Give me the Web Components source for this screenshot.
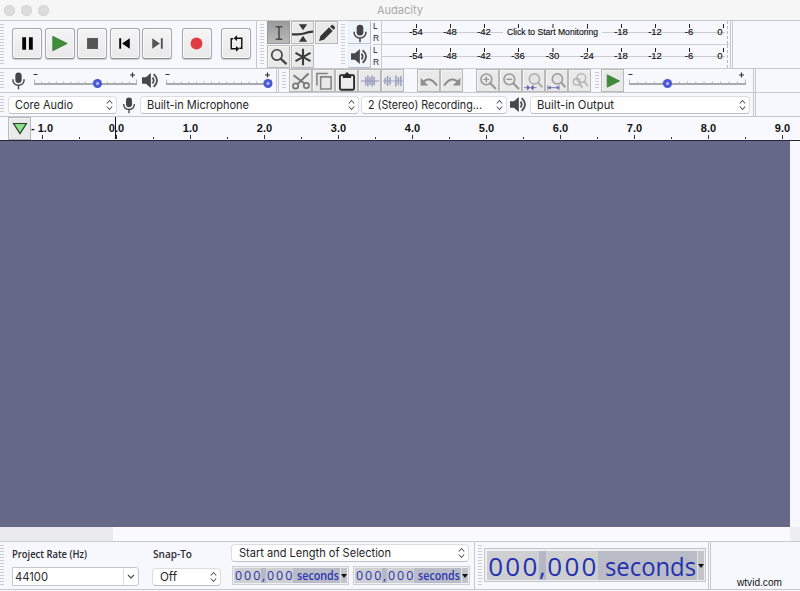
<!DOCTYPE html>
<html lang="en">
<head>
<meta charset="utf-8">
<title>Audacity</title>
<style>
html, body { margin: 0; width: 800px; height: 591px; overflow: hidden; }
body { font-family: "Open Sans", "Noto Sans", sans-serif; background: #f7f8fe; color: #2b2b2d; }
</style>
</head>
<body>
<audacity-window></audacity-window>

<script>
// Icon set. Every drawing uses a 24x24 box.
const ICONS = {
    pause: '<path d="M6.5 5.500h4v13h-4zM13.500 5.500h4v13h-4z" fill="#050505"/>',
    play: '<path d="M5 4.500v15L20 12z" fill="#3f8d3b" stroke="#327432" stroke-width=".8"/>',
    stop: '<path d="M6.3 6.3h11.400v11.400h-11.400z" fill="#555"/>',
    start: '<path d="M6.5 6.5h2v11h-2zM17.5 6.5v11L9.5 12z" fill="#050505"/>',
    end: '<path d="M15.500 6.500h2v11h-2zM6.500 6.500v11l8-5.500z" fill="#555"/>',
    record: '<circle cx="12" cy="12" r="6.200" fill="#e13c42"/>',
    loop: '<path d="M8.500 7H6.500v10.500H12M15 17H17.500V6.500H11" fill="none" stroke="#111" stroke-width="1.500"/><path d="M12.500 3.500v6L9 6.500zM11.500 14.500v6l3.500-3z" fill="#111"/>',
    ibeam: '<path d="M8 4.500h8M12 4.500v15M8 19.500h8" fill="none" stroke="#4a4a4a" stroke-width="1.900"/>',
    envelope: '<path d="M0 13.500c7-.3 10 .5 14-1.200 3-1.300 6-1.800 9-1.800" fill="none" stroke="#383838" stroke-width="2.500"/><path d="M7.500 2.500h9L12 9zM7.500 21.500h9L12 15z" fill="#383838"/>',
    pencil: '<path d="M2.500 21.500l1.600-5.800L14.500 5.200l4.300 4.300L8.300 20zM15.800 4.100l1.400-1.400q1.300-1 2.500.2l1.500 1.500q1 1.200 0 2.400l-1.400 1.400z" fill="#353535"/>',
    zoom: '<circle cx="9.500" cy="9.500" r="6.200" fill="none" stroke="#444" stroke-width="2"/><path d="M14 14l7 6.500" stroke="#444" stroke-width="2.600"/>',
    multi: '<path d="M12 2v20M3 7l18 10M21 7L3 17" stroke="#3c3c3c" stroke-width="2.500"/>',
    mic: '<rect x="8" y="2" width="8" height="13" rx="4" fill="#454549"/><path d="M5 10.500v1.500q.5 5.500 7 6 6.500-.5 7-6v-1.500M12 18v5" fill="none" stroke="#454549" stroke-width="1.800"/>',
    speaker: '<path d="M0 7.500h5.500L12.500 1.500v21L5.500 16.500H0z" fill="#48484b"/><path d="M14.800 8q3.500 4 0 8M16.500 3q9.500 9 0 18" fill="none" stroke="#48484b" stroke-width="2.500"/>',
    cut: '<path d="M21 3L8 15.500M3 5l14 10.500" stroke="#777" stroke-width="2.300"/><circle cx="5.500" cy="18" r="3.200" fill="none" stroke="#777" stroke-width="2"/><circle cx="18.500" cy="17.500" r="3.200" fill="none" stroke="#777" stroke-width="2"/>',
    copy: '<path d="M8 7h12.500v14.500H8z" fill="none" stroke="#858585" stroke-width="1.900"/><path d="M3.500 17.500V3h13" fill="none" stroke="#858585" stroke-width="1.900"/>',
    paste: '<rect x="3.500" y="5" width="17" height="17.500" rx="1.500" fill="#ededed" stroke="#292929" stroke-width="2.200"/><path d="M7 8.500V4.500h2.500q.5-3 2.500-3t2.500 3H17v4z" fill="#292929"/>',
    trim: '<path d="M1 12h22" stroke="#8d95b5" stroke-width="1.200"/><path d="M7 7v10M9.500 5.500v13M12 7.500v9M14.500 5.500v13M17 7v10" stroke="#929abc" stroke-width="1.700"/>',
    silence: '<path d="M0 12h24" stroke="#9ba2bb" stroke-width="1.100"/><path d="M2.500 8.500v7M5.500 6v12M8.500 7.500v9M15.500 5.500v13M18.500 7.500v9M21.500 6v12" stroke="#929abc" stroke-width="1.700"/>',
    undo: '<path d="M4.500 13.500q8-8.500 17 4" fill="none" stroke="#8e8e8e" stroke-width="2.400"/><path d="M2 8v9.500h9z" fill="#8e8e8e"/>',
    redo: '<path d="M19.500 13.500q-8-8.500-17 4" fill="none" stroke="#8e8e8e" stroke-width="2.400"/><path d="M22 8v9.500h-9z" fill="#8e8e8e"/>',
    zoomin: '<circle cx="10" cy="10" r="6.500" fill="none" stroke="#999" stroke-width="1.900"/><path d="M14.500 14.500l7 7" stroke="#999" stroke-width="2.600"/><path d="M6.500 10h7M10 6.500v7" stroke="#999" stroke-width="1.700"/>',
    zoomout: '<circle cx="10" cy="10" r="6.500" fill="none" stroke="#999" stroke-width="1.900"/><path d="M14.500 14.500l7 7" stroke="#999" stroke-width="2.600"/><path d="M6.500 10h7" stroke="#999" stroke-width="1.700"/>',
    zoomsel: '<circle cx="12.500" cy="9.500" r="6.200" fill="#e4e4e4" stroke="#aaa" stroke-width="1.800"/><path d="M17 14l5 5.500" stroke="#aaa" stroke-width="2.300"/><path d="M0 20h6M9 20h6M4 17.500l3 2.500-3 2.500zM11 17.500l-3 2.500 3 2.500z" fill="#6168a8" stroke="#6168a8"/>',
    zoomfit: '<circle cx="12.500" cy="9.500" r="6.200" fill="#e4e4e4" stroke="#999" stroke-width="1.800"/><path d="M17 14l5 5.500" stroke="#999" stroke-width="2.300"/><path d="M1 17v6M14.500 17v6M1.500 20h13M4 18.500l-2 1.500 2 1.500zM12 18.500l2 1.500-2 1.500z" fill="#6168a8" stroke="#6168a8"/>',
    zoomtoggle: '<circle cx="13.500" cy="8.500" r="5.300" fill="none" stroke="#b3b3b3" stroke-width="1.700"/><circle cx="8" cy="13" r="4" fill="none" stroke="#b3b3b3" stroke-width="1.600"/><path d="M16.500 12l5 6M11 15.500l4 4.500" stroke="#b3b3b3" stroke-width="2.200"/>',
    pin: '<path d="M5 6h14l-7 11z" fill="#8fe08a" stroke="#2c3d2c" stroke-width="1.300"/>'
}

class UiIcon extends HTMLElement {
    constructor() {
        super()
        this.attachShadow({ mode: 'open' })
    }

    connectedCallback() {
        const size = this.getAttribute('size') ?? '22'
        this.shadowRoot.innerHTML = `
            <style>
            :host { display: block; flex: none; width: ${size}px; height: ${size}px; }
            svg { display: block; }
            </style>
            <svg width="${size}" height="${size}" viewBox="0 0 24 24">${ICONS[this.getAttribute('name')]}</svg>
        `
    }
}
customElements.define('ui-icon', UiIcon)

// Text stretched or condensed to a fixed width
class FitText extends HTMLElement {
    constructor() {
        super()
        this.attachShadow({ mode: 'open' })
    }

    connectedCallback() {
        const width = Number(this.getAttribute('width'))
        this.shadowRoot.innerHTML = `
            <style>
            :host { display: block; flex: none; width: ${width}px; white-space: nowrap; }
            span { display: inline-block; transform-origin: 0 50%; }
            </style>
            <span></span>
        `
        const span = this.shadowRoot.querySelector('span')
        span.textContent = this.getAttribute('text')
        span.style.transform = `scaleX(${width / span.getBoundingClientRect().width})`
    }
}
customElements.define('fit-text', FitText)

// Dotted handle at the left of each toolbar
class ToolGrip extends HTMLElement {
    constructor() {
        super()
        this.attachShadow({ mode: 'open' })
        this.shadowRoot.innerHTML = `
            <style>
            :host {
                display: block; flex: none; width: 4px; align-self: stretch; margin: 3px 0;
                background: repeating-linear-gradient(#cbccd2 0 1px, transparent 1px 3px);
            }
            </style>
        `
    }
}
customElements.define('tool-grip', ToolGrip)

class TransportButton extends HTMLElement {
    constructor() {
        super()
        this.attachShadow({ mode: 'open' })
    }

    connectedCallback() {
        this.shadowRoot.innerHTML = `
            <style>
            :host {
                display: grid; place-items: center; flex: none; box-sizing: border-box;
                width: 30px; height: 31px; border: 1px solid #a9a9ab; border-bottom-color: #8c8c8e; border-radius: 3px;
                background: linear-gradient(#f4f4f4, #e9e9ea); box-shadow: inset 0 0 0 1px #fafafa, 0 1px 1px #ccc;
            }
            </style>
            <ui-icon name="${this.getAttribute('icon')}" size="23"></ui-icon>
        `
    }
}
customElements.define('transport-button', TransportButton)

class ToolButton extends HTMLElement {
    constructor() {
        super()
        this.attachShadow({ mode: 'open' })
    }

    connectedCallback() {
        this.shadowRoot.innerHTML = `
            <style>
            :host {
                display: grid; place-items: center; flex: none; box-sizing: border-box;
                width: 23px; height: 23px; border: 1px solid #b9b9bc; background: #e9e9ea;
                box-shadow: inset 1px 1px #f5f5f5;
            }
            :host([active]) { background: linear-gradient(#9c9c9c, #b9b9b9); border-color: #999; box-shadow: none; }
            :host([blue]) { background: #f0f4fd; border-color: #e9edf6 #b4bfd6 #b4bfd6 #e9edf6; box-shadow: none; }
            </style>
            <ui-icon name="${this.getAttribute('icon')}" size="${this.getAttribute('size') ?? 20}"></ui-icon>
        `
    }
}
customElements.define('tool-button', ToolButton)

class UiSelect extends HTMLElement {
    constructor() {
        super()
        this.attachShadow({ mode: 'open' })
    }

    connectedCallback() {
        const width = this.getAttribute('width')
        this.shadowRoot.innerHTML = `
            <style>
            :host {
                display: flex; align-items: center; justify-content: space-between; flex: none; box-sizing: border-box;
                width: ${width}px; height: 18px; padding: 0 3px 0 6px; border: 1px solid #dcdde2; border-bottom-color: #bfc0c6;
                border-radius: 4px; background: #fff; font: 11.500px/16px Inter, sans-serif; color: #262628;
            }
            svg { display: block; }
            </style>
            <slot></slot>
            <svg width="7" height="12" viewBox="0 0 7 12"><path d="M.8 4.500L3.500 1.500 6.200 4.500M.8 7.500l2.700 3 2.700-3" fill="none" stroke="#5a5a5c" stroke-width="1.100"/></svg>
        `
    }
}
customElements.define('ui-select', UiSelect)

class LevelSlider extends HTMLElement {
    constructor() {
        super()
        this.attachShadow({ mode: 'open' })
    }

    connectedCallback() {
        const width = Number(this.getAttribute('width'))
        const value = Number(this.getAttribute('value'))
        const end = width - 4
        let ticks = ''
        for (let i = 0; i <= 14; i++) {
            const x = 1.5 + i * (end - 2) / 14
            ticks += `<path d="M${x} ${i % 14 ? 11.5 : 9.5}V14"/>`
        }
        this.shadowRoot.innerHTML = `
            <style>
            :host { display: block; flex: none; width: ${width}px; height: 22px; }
            svg { display: block; overflow: visible; }
            </style>
            <svg width="${width}" height="22">
                <g stroke="#b7b8bd">${ticks}</g>
                <path d="M1 14H${end}" stroke="#a9aaae" stroke-width="2"/>
                <path d="M.5 4.500h4M${end - 7} 5h5M${end - 4.5} 2.500v5" stroke="#333" stroke-width="1.200"/>
                <circle cx="${value}" cy="13.500" r="4.500" fill="#4a55d5"/>
                <circle cx="${value}" cy="13.500" r="1.700" fill="#a9b2f5"/>
            </svg>
        `
    }
}
customElements.define('level-slider', LevelSlider)

// Level meter: L/R labels and a dB scale
class LevelMeter extends HTMLElement {
    constructor() {
        super()
        this.attachShadow({ mode: 'open' })
    }

    connectedCallback() {
        const hint = this.getAttribute('hint')
        const marks = [[-54, 34], [-48, 68], [-42, 102], [-36, 136], [-30, 170.5], [-24, 205], [-18, 239], [-12, 273], [-6, 307], [0, 338]]
        let scale = ''
        for (const [db, x] of marks) {
            scale += `<path d="M${x + (db ? .5 : 3.5)} 3v4" stroke="#222"/>`
            if (hint && db <= -24 && db >= -36) continue
            scale += `<text x="${x}" y="14" text-anchor="middle">${db}</text>`
        }
        const line = hint ? 'M0 11.500H121M220 11.500H343' : 'M0 11.500H343'
        const label = hint ? `<text x="125" y="14" textLength="91" lengthAdjust="spacingAndGlyphs">${hint}</text>` : ''
        this.shadowRoot.innerHTML = `
            <style>
            :host { display: flex; flex: none; width: 356px; height: 23px; font: 9.5px/12px "Liberation Sans", sans-serif; color: #222; }
            .channels { width: 8px; font-size: 8.5px; line-height: 10px; }
            .channels div { height: 12px; }
            svg { display: block; border-left: 1px solid #c8c9ce; border-right: 1px dashed #b9bac0; }
            text { fill: #111; stroke: #111; stroke-width: .15; }
            </style>
            <div class="channels"><div>L</div><div>R</div></div>
            <svg width="345" height="23"><path d="${line}" stroke="#cbccd1"/>${scale}${label}</svg>
        `
    }
}
customElements.define('level-meter', LevelMeter)

class TimeRuler extends HTMLElement {
    constructor() {
        super()
        this.attachShadow({ mode: 'open' })
        let marks = ''
        for (let i = -1; i < 10; i++) {
            const x = 116 + i * 74
            const name = i < 0 ? '- 1.0' : i + '.0'
            marks += `<path d="M${x + .5} 18v4M${x + 37.5} 20v2" stroke="#333"/>`
            marks += `<text x="${i < 0 ? 42 : x + .5}" y="14.500" text-anchor="middle">${name}</text>`
        }
        this.shadowRoot.innerHTML = `
            <style>
            :host { display: grid; height: 24px; border-bottom: 1px solid #25283a; background: #f8f9fe; box-sizing: border-box; }
            svg, tool-button { grid-area: 1 / 1; }
            tool-button { margin-left: 8px; }
            svg { display: block; }
            text { font: bold 11px "Liberation Sans", sans-serif; fill: #111; }
            </style>
            <svg width="800" height="23">${marks}<path d="M115.500 0v22" stroke="#111"/></svg>
            <tool-button icon="pin" size="22"></tool-button>
        `
    }
}
customElements.define('time-ruler', TimeRuler)

// Numeric time field, one cell per digit
class TimeField extends HTMLElement {
    constructor() {
        super()
        this.attachShadow({ mode: 'open' })
    }

    connectedCallback() {
        const cells = [...'000,000'].map(c => c === ',' ? '<i>,</i>' : `<b>${c}</b>`).join('')
        const big = this.hasAttribute('big')
        this.shadowRoot.innerHTML = `
            <style>
            :host {
                display: flex; flex: none; box-sizing: border-box; width: 117px; height: 19px; padding: 1px;
                border: 1px solid #cfd0d6; background: #eeeff3; color: #2b34b4; font: 12.500px/16px "Open Sans", sans-serif;
                --digit: 9.1px; --comma: 4.700px; --arrow: 7px;
            }
            :host([big]) {
                width: 222px; height: 34px; padding: 2px 1px 1px 2px; font-size: 26px; line-height: 30px; border-color: #c3c5cb;
                --digit: 17.200px; --comma: 7.500px; --arrow: 7px; color: #2431b0;
            }
            b, i { font-style: normal; font-weight: normal; text-align: center; width: var(--digit); background: #cecfd1; }
            i { width: var(--comma); background: #b5b8c2; }
            .unit { flex: 1; display: flex; background: #b9bcc6; padding-left: 4px; font-weight: 600; font-size: 12px; }
            :host([big]) .unit { font-weight: normal; padding-left: 7px; font-size: 26px; }
            .arrow { width: var(--arrow); background: #c2c4ca; border-left: 1px solid #e4e5e9; display: grid; place-items: center; box-sizing: border-box; }
            .arrow svg { overflow: visible; }
            </style>
            ${cells}
            <div class="unit"><fit-text text="seconds" width="${big ? 91 : 42}"></fit-text></div>
            <div class="arrow"><svg width="6" height="4"><path d="M0 0h6L3 4z" fill="#111"/></svg></div>
        `
    }
}
customElements.define('time-field', TimeField)

class AudacityWindow extends HTMLElement {
    constructor() {
        super()
        this.attachShadow({ mode: 'open' })
    }

    render() {
        this.shadowRoot.innerHTML = `
            <style>
            :host { display: flex; flex-direction: column; width: 800px; height: 591px; }
            header {
                display: grid; grid-template-columns: 1fr auto 1fr; align-items: center; height: 21px; box-sizing: border-box;
                background: #f6f6f6; border-bottom: 1px solid #cacacd; font: 11px/20px Inter, sans-serif; color: #a8a8a8;
            }
            .lights { display: flex; gap: 6px; padding-left: 4px; }
            .lights i { width: 11px; height: 11px; border-radius: 50%; background: #dcdcdc; box-shadow: inset 0 0 0 1px #d6d6d6; }
            .row { display: flex; align-items: center; box-sizing: border-box; border-bottom: 1px solid #c7c8ce; flex: none; }
            .top { height: 48px; }
            .mix { height: 24px; }
            .device { height: 24px; }
            .sep { flex: none; width: 3px; align-self: stretch; border: solid #c7c8ce; border-width: 0 1px; box-sizing: border-box; }
            .sep.thin { width: 1px; border-right: 0; }
            .transport { display: flex; gap: 2.500px; margin: 0 5px 2px 8px; }
            .transport :nth-child(6) { margin-left: 7px; }
            .transport :nth-child(7) { margin-left: 7px; }
            .tools { display: grid; grid-template-columns: repeat(3, 24px); grid-auto-rows: 24px; margin: 0 2px 0 3px; align-self: start; }
            .meters { display: grid; grid-template-columns: 25px 356px; grid-auto-rows: 24px; margin-left: 3px; align-self: start; }
            .meters level-meter { border-bottom: 1px solid #cdced4; }
            .edit { display: flex; margin-left: 3px; }
            .edit :nth-child(6), .edit :nth-child(8) { margin-left: 13px; }
            .tracks { display: flex; height: 386px; flex: none; }
            .tracks div { width: 790px; background: #656886; }
            .scroll { height: 15px; flex: none; box-sizing: border-box; background: #fafafc; border-bottom: 1px solid #cacbd0; display: flex; }
            .scroll div { width: 113px; background: #ebebed; }
            .scroll .corner { width: 10px; margin-left: auto; background: #eee; }
            .status { height: 48px; align-items: stretch; }
            .col { display: flex; flex-direction: column; font-size: 10px; line-height: 14px; font-weight: 600; }
            .combo {
                display: flex; width: 127px; height: 19px; box-sizing: border-box; border: 1px solid #c6c7cc; background: #fff;
                border-radius: 0 3px 3px 0; font: 11.500px/19px Inter, sans-serif; padding-left: 2px; justify-content: space-between;
            }
            .combo svg { border-left: 1px solid #e0e0e4; }
            .brand { font: 10.500px/14px "Liberation Sans", sans-serif; color: #111; margin: 33px 0 0 26px; }
            </style>

            <header>
                <div class="lights"><i></i><i></i><i></i></div>
                <fit-text text="Audacity" width="46"></fit-text>
            </header>

            <div class="row top">
                <tool-grip></tool-grip>
                <div class="transport">
                    <transport-button icon="pause"></transport-button>
                    <transport-button icon="play"></transport-button>
                    <transport-button icon="stop"></transport-button>
                    <transport-button icon="start"></transport-button>
                    <transport-button icon="end"></transport-button>
                    <transport-button icon="record"></transport-button>
                    <transport-button icon="loop"></transport-button>
                </div>
                <span class="sep thin"></span>
                <tool-grip style="margin-left: 3px"></tool-grip>
                <div class="tools">
                    <tool-button icon="ibeam" active></tool-button>
                    <tool-button icon="envelope" size="22"></tool-button>
                    <tool-button icon="pencil"></tool-button>
                    <tool-button icon="zoom"></tool-button>
                    <tool-button icon="multi"></tool-button>
                </div>
                <tool-grip></tool-grip>
                <div class="meters">
                    <tool-button icon="mic" blue></tool-button>
                    <level-meter hint="Click to Start Monitoring"></level-meter>
                    <tool-button icon="speaker" size="17" blue></tool-button>
                    <level-meter></level-meter>
                </div>
                <span class="sep" style="margin-left: 1px"></span>
            </div>

            <div class="row mix">
                <tool-grip></tool-grip>
                <ui-icon name="mic" size="19" style="margin-left: 5px"></ui-icon>
                <level-slider width="108" value="64.5" style="margin-left: 5px"></level-slider>
                <ui-icon name="speaker" size="17" style="margin-left: 1px"></ui-icon>
                <level-slider width="111" value="103" style="margin-left: 6px"></level-slider>
                <span class="sep"></span>
                <tool-grip style="margin-left: 3px"></tool-grip>
                <div class="edit">
                    <tool-button icon="cut"></tool-button>
                    <tool-button icon="copy"></tool-button>
                    <tool-button icon="paste"></tool-button>
                    <tool-button icon="trim"></tool-button>
                    <tool-button icon="silence"></tool-button>
                    <tool-button icon="undo"></tool-button>
                    <tool-button icon="redo"></tool-button>
                    <tool-button icon="zoomin"></tool-button>
                    <tool-button icon="zoomout"></tool-button>
                    <tool-button icon="zoomsel"></tool-button>
                    <tool-button icon="zoomfit"></tool-button>
                    <tool-button icon="zoomtoggle"></tool-button>
                </div>
                <tool-grip style="margin-left: 4px"></tool-grip>
                <tool-button icon="play" style="margin-left: 2px"></tool-button>
                <level-slider width="122" value="39.5" style="margin-left: 4px"></level-slider>
                <span class="sep" style="margin-left: 3px"></span>
            </div>

            <div class="row device">
                <tool-grip></tool-grip>
                <ui-select width="109" style="margin-left: 4px"><fit-text text="Core Audio" width="58"></fit-text></ui-select>
                <ui-icon name="mic" size="18" style="margin-left: 3px"></ui-icon>
                <ui-select width="219" style="margin-left: 2px"><fit-text text="Built-in Microphone" width="102"></fit-text></ui-select>
                <ui-select width="146" style="margin-left: 2px"><fit-text text="2 (Stereo) Recording..." width="114"></fit-text></ui-select>
                <ui-icon name="speaker" size="17" style="margin-left: 3px"></ui-icon>
                <ui-select width="220" style="margin-left: 3px"><fit-text text="Built-in Output" width="77"></fit-text></ui-select>
                <span class="sep" style="margin-left: 3px"></span>
            </div>

            <time-ruler></time-ruler>
            <div class="tracks"><div></div></div>
            <div class="scroll"><div></div><div class="corner"></div></div>

            <div class="row status">
                <tool-grip></tool-grip>
                <div class="col" style="margin: 5px 0 0 8px; gap: 6px">
                    <fit-text text="Project Rate (Hz)" width="75"></fit-text>
                    <div class="combo">
                        <fit-text text="44100" width="33"></fit-text>
                        <svg width="14" height="17"><path d="M4 7l3 3 3-3" fill="none" stroke="#555" stroke-width="1.300"/></svg>
                    </div>
                </div>
                <div class="col" style="margin: 5px 0 0 13px; gap: 7px">
                    <fit-text text="Snap-To" width="39" style="margin-left: 1px"></fit-text>
                    <ui-select width="69"><fit-text text="Off" width="17" style="margin-left: 1px"></fit-text></ui-select>
                </div>
                <div class="col" style="margin: 2px 0 0 10px; gap: 4px">
                    <ui-select width="238"><fit-text text="Start and Length of Selection" width="152" style="margin-left: 1px"></fit-text></ui-select>
                    <div style="display: flex; gap: 4px; margin-left: 1px">
                        <time-field></time-field>
                        <time-field></time-field>
                    </div>
                </div>
                <span class="sep thin" style="margin-left: 4px"></span>
                <tool-grip style="margin-left: 3px"></tool-grip>
                <time-field big style="margin: 6px 0 0 2px"></time-field>
                <span class="sep" style="margin-left: 2px"></span>
                <div class="brand"><fit-text text="wtvid.com" width="45"></fit-text></div>
            </div>
        `
    }

    connectedCallback() {
        this.render()
    }
}
customElements.define('audacity-window', AudacityWindow)
</script>
</body>
</html>
